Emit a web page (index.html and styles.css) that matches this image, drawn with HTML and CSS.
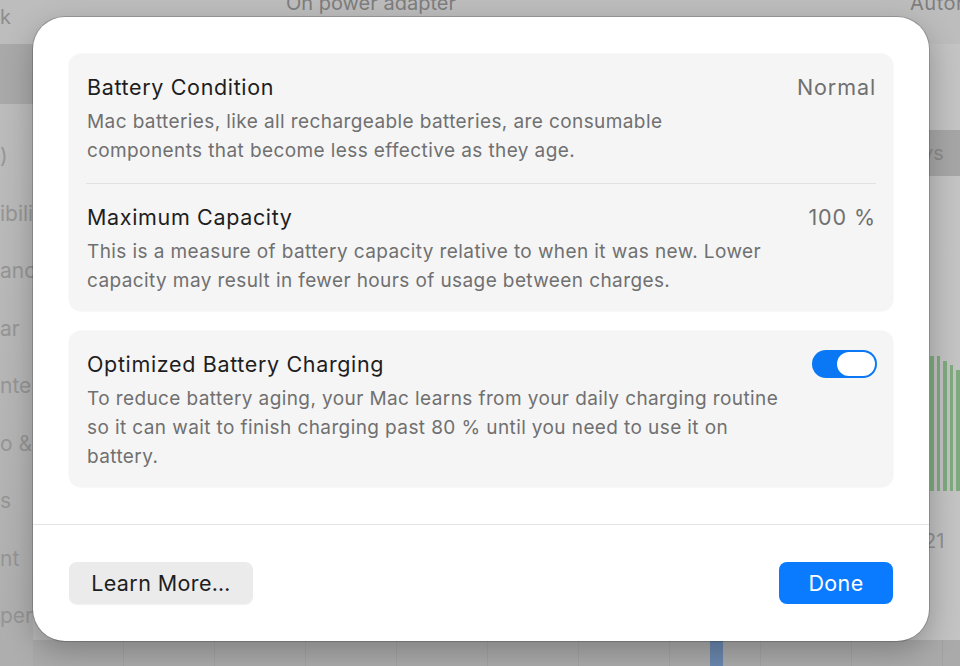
FILE: index.html
```html
<!DOCTYPE html>
<html lang="en">
<head>
<meta charset="utf-8">
<title>Battery Health</title>
<link rel="stylesheet" href="styles.css">
</head>
<body>
<div class="screen">
  <div class="backdrop">
    <div class="topbar">
      <span class="top-left">k</span>
      <span class="top-mid">On power adapter</span>
      <span class="top-right">Autor</span>
    </div>
    <div class="bg-main">
      <div class="sidebar">
        <div class="side-sel"></div>
        <div class="side-item">)</div>
        <div class="side-item">ibili</div>
        <div class="side-item">anc</div>
        <div class="side-item">ar</div>
        <div class="side-item">nte</div>
        <div class="side-item">o &amp;</div>
        <div class="side-item">s</div>
        <div class="side-item">nt</div>
        <div class="side-item">per</div>
      </div>
      <div class="bg-content">
        <div class="bg-right">
          <div class="bg-tab">ys</div>
          <div class="bg-bars">
            <span></span><span></span><span></span><span></span><span></span>
          </div>
          <div class="bg-label">21</div>
        </div>
        <div class="bg-grid">
          <span class="blue-bar"></span>
        </div>
      </div>
    </div>
  </div>

  <div class="dialog">
    <div class="dialog-body">
      <div class="group">
        <div class="row">
          <div class="row-head">
            <div class="row-title">Battery Condition</div>
            <div class="row-value">Normal</div>
          </div>
          <div class="row-desc">Mac batteries, like all rechargeable batteries, are consumable<br>components that become less effective as they age.</div>
        </div>
        <div class="sep"></div>
        <div class="row">
          <div class="row-head">
            <div class="row-title">Maximum Capacity</div>
            <div class="row-value">100 %</div>
          </div>
          <div class="row-desc">This is a measure of battery capacity relative to when it was new. Lower<br>capacity may result in fewer hours of usage between charges.</div>
        </div>
      </div>

      <div class="group">
        <div class="row">
          <div class="row-head">
            <div class="row-title">Optimized Battery Charging</div>
            <div class="toggle"><span class="knob"></span></div>
          </div>
          <div class="row-desc">To reduce battery aging, your Mac learns from your daily charging routine<br>so it can wait to finish charging past 80 % until you need to use it on<br>battery.</div>
        </div>
      </div>
    </div>
    <div class="dialog-footer">
      <button class="btn btn-secondary">Learn More…</button>
      <button class="btn btn-primary">Done</button>
    </div>
  </div>
</div>
</body>
</html>
```

FILE: styles.css
```css
* { box-sizing: border-box; }

html, body {
  margin: 0;
  padding: 0;
  width: 960px;
  height: 666px;
  overflow: hidden;
  font-family: Inter, "Noto Sans", "Liberation Sans", sans-serif;
}

.screen {
  position: relative;
  width: 960px;
  height: 666px;
  background: #b3b3b3;
  overflow: hidden;
}

/* ---------- dimmed background window ---------- */
.backdrop {
  display: flex;
  flex-direction: column;
  width: 100%;
  height: 100%;
  color: #8d8d8d;
  font-size: 20px;
}

.topbar {
  height: 44px;
  display: flex;
  align-items: flex-start;
  background: #bdbdbd;
}
.top-left { width: 30px; margin-top: 2px; line-height: 30px; }
.top-mid { margin-left: 256px; margin-top: -12px; line-height: 30px; color: #7e7e7e; }
.top-right { margin-left: auto; margin-top: -12px; margin-right: -4px; line-height: 30px; color: #7e7e7e; letter-spacing: 0.5px; }

.bg-main {
  flex: 1;
  display: flex;
}

.sidebar {
  width: 33px;
  background: linear-gradient(#bdbdbd, #b5b5b5 60%, #aeaeae);
  display: flex;
  flex-direction: column;
  overflow: hidden;
}
.side-sel {
  height: 60px;
  background: #a9a9a9;
  margin-bottom: 37px;
}
.side-item {
  height: 57.5px;
  line-height: 30px;
  white-space: nowrap;
  color: #959595;
  font-size: 21px;
}

.bg-content {
  flex: 1;
  display: flex;
  flex-direction: column;
  justify-content: space-between;
  background: linear-gradient(90deg, #b8b8b8, #b1b1b1 80%, #c4c4c4);
}

.bg-right {
  align-self: flex-end;
  width: 32px;
  display: flex;
  flex-direction: column;
  margin-top: 86px;
}
.bg-tab {
  height: 46px;
  background: #a6a6a6;
  line-height: 46px;
  color: #8a8a8a;
  font-size: 20px;
  text-indent: -6px;
  overflow: hidden;
}
.bg-bars {
  margin-top: 180px;
  height: 135px;
  display: flex;
  gap: 3px;
  padding-left: 2px;
  align-items: flex-end;
}
.bg-bars span {
  width: 4px;
  height: 100%;
  background: #7eaa7e;
}
.bg-bars span:nth-child(3) { height: 96%; }
.bg-bars span:nth-child(4) { height: 93%; }
.bg-bars span:nth-child(5) { height: 90%; }
.bg-label {
  margin-top: 38px;
  color: #8f8f8f;
  font-size: 20px;
  text-indent: -4px;
}

.bg-grid {
  height: 26px;
  position: relative;
  background:
    repeating-linear-gradient(90deg, transparent 0 90px, #a2a2a2 90px 91px);
  background-color: #aaaaaa;
}
.blue-bar {
  position: absolute;
  left: 677px;
  bottom: 0;
  width: 13px;
  height: 26px;
  background: #6a87ae;
}

/* ---------- dialog ---------- */
.dialog {
  position: absolute;
  left: 33px;
  top: 17px;
  width: 896px;
  height: 624px;
  background: #ffffff;
  border-radius: 32px;
  box-shadow: 0 0 0 1px rgba(0,0,0,0.18), 0 10px 30px rgba(0,0,0,0.25);
  display: flex;
  flex-direction: column;
  overflow: hidden;
}

.dialog-body {
  padding: 37px 36px 0 36px;
  display: flex;
  flex-direction: column;
  gap: 20px;
  height: 507px;
}

.group {
  background: #f5f5f5;
  border-radius: 12px;
  box-shadow: 0 0 0 1px rgba(0,0,0,0.025);
}

.row {
  padding: 18.5px 17px 18.5px 18px;
}
.row:last-child {
  padding-bottom: 16.5px;
}

.row-head {
  display: flex;
  justify-content: space-between;
  align-items: center;
  height: 28px;
}

.row-title {
  font-size: 21.5px;
  line-height: 28px;
  color: #1e1e1e;
  letter-spacing: 0.65px;
}

.row-value {
  font-size: 21.5px;
  line-height: 28px;
  color: #707070;
  letter-spacing: 0.9px;
}

.row-desc {
  margin-top: 6px;
  font-size: 19px;
  line-height: 29px;
  color: #707070;
  letter-spacing: 0.4px;
}

.sep {
  height: 1px;
  background: #e2e2e2;
  margin: 0 17px 0 17px;
}

.toggle {
  width: 65px;
  height: 28px;
  border-radius: 14px;
  background: #0a77f5;
  display: flex;
  justify-content: flex-end;
  align-items: center;
  padding: 2px;
  margin-right: -1px;
}
.knob {
  width: 38px;
  height: 24px;
  border-radius: 12px;
  background: #ffffff;
}

.dialog-footer {
  border-top: 1px solid #e4e4e4;
  padding: 37px 36px 0 36px;
  display: flex;
  justify-content: space-between;
  align-items: flex-start;
  flex: 1;
}

.btn {
  font-family: inherit;
  height: 42px;
  border: none;
  border-radius: 8px;
  font-size: 21.5px;
  letter-spacing: 0.4px;
  padding: 0;
}
.btn-secondary {
  width: 184px;
  background: #ebebeb;
  color: #1e1e1e;
  box-shadow: 0 1px 1px rgba(0,0,0,0.06);
}
.btn-primary {
  width: 114px;
  background: #0a7aff;
  color: #ffffff;
}
```
